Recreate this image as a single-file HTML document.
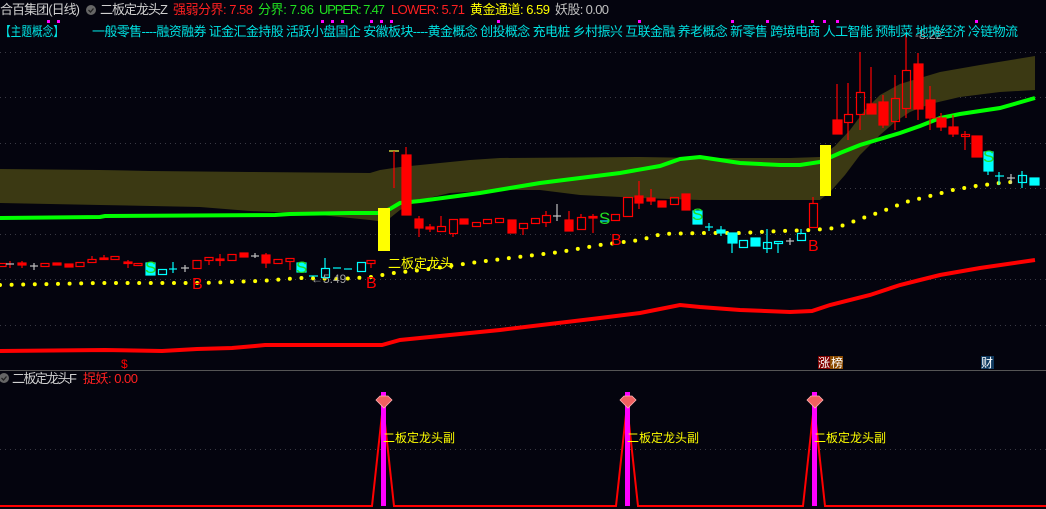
<!DOCTYPE html>
<html><head><meta charset="utf-8"><style>
html,body{margin:0;padding:0;background:#04040e;width:1046px;height:509px;overflow:hidden}
svg{display:block}
text{font-family:"Liberation Sans","Noto Sans CJK SC",sans-serif}
</style></head><body>
<svg width="1046" height="509" viewBox="0 0 1046 509" xmlns="http://www.w3.org/2000/svg">
<rect width="1046" height="509" fill="#04040e"/>
<g stroke="#3a3a44" stroke-width="1" stroke-dasharray="1 4">
<line x1="0" y1="52.5" x2="1046" y2="52.5"/>
<line x1="0" y1="97.5" x2="1046" y2="97.5"/>
<line x1="0" y1="143.5" x2="1046" y2="143.5"/>
<line x1="0" y1="188.5" x2="1046" y2="188.5"/>
<line x1="0" y1="234.5" x2="1046" y2="234.5"/>
<line x1="0" y1="279.5" x2="1046" y2="279.5"/>
<line x1="0" y1="325.5" x2="1046" y2="325.5"/>
<line x1="0" y1="449.5" x2="1046" y2="449.5"/>
</g>
<line x1="0" y1="370.5" x2="1046" y2="370.5" stroke="#555" stroke-width="1"/>

<polygon fill="#3b3913" points="0,169 100,170 150,171 250,172 370,173 380,170 400,167 430,164 470,160 500,158 640,157 700,158 790,158 820,157 835,146 850,130 865,110 880,95 900,84 940,72 980,65 1035,56 1035,90 1000,92 960,97 930,104 910,112 895,122 880,135 860,155 845,175 830,192 820,200 760,200 700,200 640,198 580,195 540,190 500,190 450,193 420,200 400,210 385,222 370,220 300,213 250,211 200,207 100,205 0,203"/>
<polyline fill="none" stroke="#00ff00" stroke-width="4" points="0,218 100,217 105,216 275,215 290,214 350,213 380,213 390,209 400,203 420,201 450,197 480,193 510,188 540,183 580,178 620,173 660,166 680,159 700,157 720,160 740,163 780,165 800,165 820,162 840,153 860,145 880,139 900,133 920,126 940,118 960,114 1000,108 1035,98"/>
<polyline fill="none" stroke="#ff0000" stroke-width="4" points="0,351 105,350 162,351 197,349 232,348 255,346 265,345 382,345 400,340 500,330 600,318 640,313 680,305 700,307 740,310 790,312 812,311 830,305 870,295 900,285 920,280 940,275 980,268 1035,260"/>
<polyline fill="none" stroke="#ffff00" stroke-width="4" stroke-linecap="round" stroke-dasharray="0 11.6" points="0,285 100,283 200,283 260,281 300,278 340,279 371,277 394,273 430,269 470,263 510,258 560,252 600,245 640,240 662,234 700,233 740,233 780,231 813,230 836,228 860,219 883,211 906,202 930,196 953,190 976,186 1000,183 1012,182"/>

<rect x="378" y="208" width="12" height="43" fill="#ffff00"/>
<rect x="820" y="145" width="11" height="51" fill="#ffff00"/>

<g stroke-width="1.2">
<g stroke="#ff0000" fill="none">
<rect x="-2" y="263.5" width="8" height="3"/>
<rect x="41" y="263.5" width="8" height="3"/>
<rect x="76" y="262.5" width="8" height="4"/>
<rect x="88" y="259.5" width="8" height="3"/><line x1="92" y1="256" x2="92" y2="259"/>
<rect x="111" y="256.5" width="8" height="3"/>
<rect x="134" y="263.5" width="8" height="2"/>
<rect x="193" y="260.5" width="8" height="8"/>
<rect x="205" y="257.5" width="8" height="3"/><line x1="209" y1="261" x2="209" y2="265"/>
<rect x="228" y="254.5" width="8" height="6"/>
<rect x="274" y="259.5" width="8" height="4"/>
<rect x="286" y="258.5" width="8" height="3"/><line x1="290" y1="262" x2="290" y2="270"/>
<rect x="367" y="260.5" width="8" height="3"/><line x1="371" y1="264" x2="371" y2="268"/>
</g>
<g fill="#ff0000" stroke="#ff0000">
<rect x="18" y="263" width="8" height="2"/>
<line x1="10" y1="261" x2="10" y2="268"/><line x1="22" y1="261" x2="22" y2="268"/>
<rect x="53" y="263" width="8" height="2"/>
<rect x="65" y="264" width="8" height="3"/>
<rect x="100" y="258" width="8" height="1.5"/><line x1="104" y1="255" x2="104" y2="259"/>
<rect x="124" y="262" width="8" height="1.5"/><line x1="128" y1="260" x2="128" y2="268"/>
<rect x="216" y="259" width="8" height="1.5"/><line x1="220" y1="254" x2="220" y2="266"/>
<rect x="240" y="253" width="8" height="4"/>
<rect x="262" y="255" width="8" height="8"/><line x1="266" y1="253" x2="266" y2="268"/>
</g>
<g stroke="#c0c0c0">
<line x1="6" y1="264" x2="14" y2="264"/><line x1="30" y1="266" x2="38" y2="266"/><line x1="34" y1="263" x2="34" y2="270"/>
<line x1="181" y1="268" x2="189" y2="268"/><line x1="185" y1="265" x2="185" y2="272"/>
<line x1="251" y1="256" x2="259" y2="256"/><line x1="255" y1="253" x2="255" y2="258"/>
</g>
<g stroke="#00ffff" fill="none">
<rect x="146" y="263" width="9" height="12" fill="#00ffff"/>
<rect x="158.5" y="269.5" width="8" height="5"/>
<line x1="169" y1="269" x2="177" y2="269"/><line x1="173" y1="262" x2="173" y2="273"/>
<rect x="297" y="263" width="9" height="9" fill="#00ffff"/>
<line x1="309" y1="276" x2="318" y2="276"/>
<rect x="321.5" y="268.5" width="8" height="9"/><line x1="325" y1="258" x2="325" y2="268"/>
<line x1="333" y1="268" x2="341" y2="268"/><line x1="344" y1="269" x2="352" y2="269"/>
<rect x="357.5" y="262.5" width="8" height="9"/>
</g>

<line x1="389" y1="151" x2="399" y2="151" stroke="#ff4"/><line x1="394" y1="151" x2="394" y2="188" stroke="#ff0000"/>
<g fill="#ff0000" stroke="#ff0000">
<rect x="402" y="155" width="9" height="60"/><line x1="406" y1="147" x2="406" y2="155"/>
<rect x="415" y="219" width="8" height="9"/><line x1="419" y1="216" x2="419" y2="237"/>
<rect x="426" y="227" width="8" height="2"/><line x1="430" y1="224" x2="430" y2="232"/>
<rect x="460" y="219" width="8" height="5"/>
<rect x="508" y="220" width="8" height="13"/>
<rect x="565" y="220" width="8" height="11"/><line x1="569" y1="211" x2="569" y2="220"/>
<rect x="589" y="216.5" width="8" height="1.5"/><line x1="593" y1="214" x2="593" y2="233"/>
<rect x="635" y="196" width="8" height="7"/><line x1="639" y1="181" x2="639" y2="209"/>
<rect x="647" y="198" width="8" height="3"/><line x1="651" y1="189" x2="651" y2="205"/>
<rect x="658" y="201" width="8" height="6"/>
<rect x="682" y="194" width="8" height="16"/>
</g>
<g stroke="#ff0000" fill="none">
<rect x="437.5" y="226.5" width="8" height="5"/><line x1="441" y1="216" x2="441" y2="226"/>
<rect x="449.5" y="219.5" width="8" height="14"/><line x1="453" y1="233" x2="453" y2="237"/>
<rect x="472.5" y="222.5" width="8" height="4"/>
<rect x="483.5" y="219.5" width="8" height="4"/>
<rect x="495.5" y="218.5" width="8" height="4"/>
<rect x="519.5" y="223.5" width="8" height="5"/><line x1="523" y1="228" x2="523" y2="235"/>
<rect x="531.5" y="218.5" width="8" height="5"/>
<rect x="542.5" y="215.5" width="8" height="7"/><line x1="546" y1="211" x2="546" y2="215"/><line x1="546" y1="222" x2="546" y2="227"/>
<rect x="577.5" y="217.5" width="8" height="12"/><line x1="581" y1="214" x2="581" y2="217"/>
<rect x="611.5" y="214.5" width="8" height="6"/>
<rect x="623.5" y="197.5" width="9" height="19"/>
<rect x="670.5" y="197.5" width="8" height="7"/>
<rect x="809.5" y="203.5" width="8" height="24"/><line x1="813" y1="197" x2="813" y2="203"/>
</g>
<g stroke="#c0c0c0"><line x1="553" y1="216" x2="561" y2="216"/><line x1="557" y1="204" x2="557" y2="221"/>
<line x1="786" y1="241" x2="794" y2="241"/><line x1="790" y1="238" x2="790" y2="245"/>
<line x1="1007" y1="178" x2="1015" y2="178"/><line x1="1011" y1="174" x2="1011" y2="184"/></g>
<g stroke="#00ffff" fill="none">
<line x1="600" y1="221" x2="608" y2="221"/>
<rect x="693" y="211" width="9" height="13" fill="#00ffff"/>
<line x1="705" y1="227" x2="713" y2="227"/><line x1="709" y1="223" x2="709" y2="231"/>
<rect x="717" y="230" width="8" height="3" fill="#00ffff"/><line x1="721" y1="226" x2="721" y2="236"/>
<rect x="728" y="233" width="9" height="10" fill="#00ffff"/><line x1="732" y1="243" x2="732" y2="253"/>
<rect x="739.5" y="240.5" width="8" height="7"/>
<rect x="751" y="238" width="9" height="8" fill="#00ffff"/>
<rect x="763.5" y="242.5" width="8" height="6"/><line x1="767" y1="229" x2="767" y2="253"/>
<rect x="774.5" y="241.5" width="8" height="2"/><line x1="778" y1="244" x2="778" y2="253"/>
<rect x="797.5" y="233.5" width="8" height="7"/><line x1="801" y1="229" x2="801" y2="233"/>
<rect x="984" y="152" width="9" height="19" fill="#00ffff"/><line x1="988" y1="171" x2="988" y2="175"/>
<line x1="995" y1="176" x2="1004" y2="176"/><line x1="999" y1="172" x2="999" y2="185"/>
<rect x="1018.5" y="175.5" width="8" height="7"/><line x1="1022" y1="171" x2="1022" y2="188"/>
<rect x="1030" y="178" width="9" height="7" fill="#00ffff"/>
</g>
<g fill="#ff0000" stroke="#ff0000">
<rect x="833" y="120" width="9" height="14"/><line x1="837" y1="84" x2="837" y2="120"/>
<rect x="867" y="104" width="9" height="10"/><line x1="871" y1="67" x2="871" y2="104"/>
<rect x="879" y="102" width="9" height="23"/><line x1="883" y1="95" x2="883" y2="128"/>
<rect x="914" y="64" width="9" height="45"/><line x1="918" y1="53" x2="918" y2="120"/>
<rect x="926" y="100" width="9" height="18"/><line x1="930" y1="86" x2="930" y2="130"/>
<rect x="937" y="118" width="9" height="9"/><line x1="941" y1="113" x2="941" y2="131"/>
<rect x="949" y="127" width="9" height="7"/><line x1="953" y1="115" x2="953" y2="137"/>
<rect x="972" y="136" width="10" height="21"/>
</g>
<g stroke="#ff0000" fill="none">
<rect x="844.5" y="114.5" width="8" height="8"/><line x1="848" y1="83" x2="848" y2="114"/><line x1="848" y1="122" x2="848" y2="140"/>
<rect x="856.5" y="92.5" width="8" height="22"/><line x1="860" y1="52" x2="860" y2="92"/><line x1="860" y1="114" x2="860" y2="130"/>
<rect x="891.5" y="98.5" width="8" height="23"/><line x1="895" y1="75" x2="895" y2="98"/><line x1="895" y1="121" x2="895" y2="130"/>
<rect x="902.5" y="70.5" width="8" height="38"/><line x1="906" y1="33" x2="906" y2="70"/><line x1="906" y1="108" x2="906" y2="118"/>
<rect x="961.5" y="134.5" width="8" height="2"/><line x1="965" y1="131" x2="965" y2="150"/>
</g>
</g>

<g font-size="17" fill="#22dd22">
<text x="145" y="273">S</text><text x="296" y="273">S</text><text x="599" y="224">S</text><text x="692" y="220">S</text><text x="983" y="162">S</text>
</g>
<g font-size="16" fill="#ff0000">
<text x="192" y="289">B</text><text x="366" y="288">B</text><text x="611" y="245">B</text><text x="808" y="251">B</text>
</g>
<text x="388" y="268" font-size="13" fill="#ffff00">二板定龙头</text>
<text x="311" y="283" font-size="12" fill="#a0a0a0">←5.49</text>
<text x="915" y="39" font-size="12" fill="#a0a0a0">-8.22</text>
<text x="121" y="368" font-size="12" fill="#ff0000">$</text>
<rect x="818" y="356" width="12" height="13" fill="#800000"/><rect x="830" y="356" width="13" height="13" fill="#8a4a00"/>
<text x="818" y="367" font-size="12" fill="#fff" textLength="25">涨榜</text>
<rect x="981" y="356" width="13" height="13" fill="#103a60"/>
<text x="981" y="367" font-size="12" fill="#fff">财</text>

<g font-size="13">
<text x="0" y="14" fill="#d0d0d0" textLength="80">合百集团(日线)</text>
<circle cx="91" cy="10" r="5" fill="#666"/><path d="M88.5 10 L90.5 12 L93.5 8.5" stroke="#222" stroke-width="1.3" fill="none"/>
<text x="100" y="14" fill="#d0d0d0" textLength="68">二板定龙头Z</text>
<text x="173" y="14" fill="#ff2020" textLength="80">强弱分界: 7.58</text>
<text x="258" y="14" fill="#20e020" textLength="56">分界: 7.96</text>
<text x="319" y="14" fill="#20e020" textLength="66">UPPER: 7.47</text>
<text x="391" y="14" fill="#ff2020" textLength="74">LOWER: 5.71</text>
<text x="470" y="14" fill="#ffff00" textLength="80">黄金通道: 6.59</text>
<text x="555" y="14" fill="#c0c0c0" textLength="54">妖股: 0.00</text>
<text x="0" y="36" fill="#00e0e0" textLength="64" lengthAdjust="spacingAndGlyphs">【主题概念】</text>
<text x="92" y="36" fill="#00e0e0" textLength="926">一般零售----融资融券 证金汇金持股 活跃小盘国企 安徽板块----黄金概念 创投概念 充电桩 乡村振兴 互联金融 养老概念 新零售 跨境电商 人工智能 预制菜 地摊经济 冷链物流</text>
</g>
<g fill="#ff00ff">
<rect x="47" y="20" width="3" height="3"/><rect x="57" y="20" width="3" height="3"/>
<rect x="321" y="20" width="3" height="3"/><rect x="331" y="20" width="3" height="3"/><rect x="341" y="20" width="3" height="3"/>
<rect x="370" y="20" width="3" height="3"/><rect x="380" y="20" width="3" height="3"/><rect x="390" y="20" width="3" height="3"/>
<rect x="497" y="20" width="3" height="3"/><rect x="638" y="20" width="3" height="3"/><rect x="731" y="20" width="3" height="3"/>
<rect x="766" y="20" width="3" height="3"/><rect x="811" y="20" width="3" height="3"/><rect x="823" y="20" width="3" height="3"/>
<rect x="836" y="20" width="3" height="3"/><rect x="975" y="20" width="3" height="3"/>
</g>

<circle cx="4" cy="378" r="5" fill="#666"/><path d="M1.5 378 L3.5 380 L6.5 376.5" stroke="#222" stroke-width="1.3" fill="none"/>
<text x="12" y="383" font-size="13" fill="#d0d0d0" textLength="65">二板定龙头F</text>
<text x="83" y="383" font-size="13" fill="#ff2020" textLength="55">捉妖: 0.00</text>
<polyline fill="none" stroke="#ff0000" stroke-width="2" points="0,506 372,506 383,405 394,506 616,506 627,405 638,506 803,506 814,405 825,506 1046,506"/>
<g fill="#ff00ff">
<rect x="381" y="392" width="5" height="114"/><rect x="625" y="392" width="5" height="114"/><rect x="812" y="392" width="5" height="114"/>
</g>
<g fill="#f06060" stroke="#ffb0b0" stroke-width="0.8">
<polygon points="376,400 380,396 388,396 392,400 384,408"/>
<polygon points="620,400 624,396 632,396 636,400 628,408"/>
<polygon points="807,400 811,396 819,396 823,400 815,408"/>
</g>
<g font-size="12" fill="#ffff00">
<text x="383" y="442">二板定龙头副</text><text x="627" y="442">二板定龙头副</text><text x="814" y="442">二板定龙头副</text>
</g>
</svg>
</body></html>
